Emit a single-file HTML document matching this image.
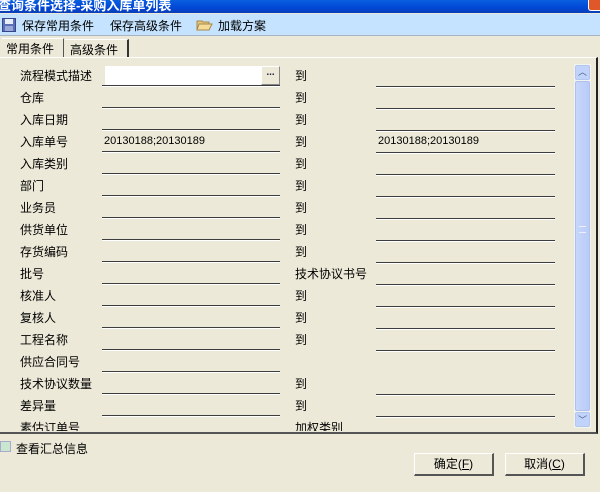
<!DOCTYPE html>
<html><head><meta charset="utf-8"><style>
*{margin:0;padding:0;box-sizing:border-box}
body{width:600px;height:492px;overflow:hidden;background:#ece9d8;font-family:"Liberation Sans","Noto Sans CJK SC","WenQuanYi Zen Hei",sans-serif;font-size:12px;color:#000;position:relative}
.a{position:absolute;white-space:nowrap}
#title{left:0;top:0;width:600px;height:13px;background:linear-gradient(#0a5fe0,#0047d6 60%,#0b3fb8);}
#title span{position:absolute;left:-2px;top:-5px;color:#fff;font-weight:bold;font-size:13px}
#close{right:0;top:0;width:12px;height:11px;background:#e0582a;border:1px solid #fff;border-top:none;border-right:none;border-radius:0 0 0 3px}
#tb{left:0;top:14px;width:600px;height:22px;background:#c5e3ff;border-bottom:1px solid #a8b4c4}
.line{position:absolute;height:2px;border-top:1px solid #3d3d3d;border-bottom:1px solid #fff}
</style></head><body>
<div class="a" id="title"><span>查询条件选择-采购入库单列表</span></div>
<div class="a" id="close"></div>
<div class="a" id="tb">
 <svg class="a" style="left:2px;top:4px" width="14" height="14"><rect x="0.5" y="0.5" width="13" height="13" fill="#5a6fb8" stroke="#34468c"/><rect x="3" y="1" width="8" height="5" fill="#e8eef8"/><rect x="3" y="8" width="8" height="5" fill="#9aa8d8"/></svg>
 <span class="a" style="left:22px;top:3px">保存常用条件</span>
 <span class="a" style="left:110px;top:3px">保存高级条件</span>
 <svg class="a" style="left:196px;top:3px" width="17" height="15"><path d="M1 4h5l1 1h6v8H1z" fill="#e8c878" stroke="#a8884a"/><path d="M3 7h13l-3 6H1z" fill="#f4dc98" stroke="#a8884a"/></svg>
 <span class="a" style="left:218px;top:3px">加载方案</span>
</div>
<!-- tabs -->
<div class="a" style="left:2px;top:38px;width:62px;height:20px;border-right:1px solid #555;border-top:1px solid #fff;background:#ece9d8"></div>
<span class="a" style="left:6px;top:40px">常用条件</span>
<div class="a" style="left:65px;top:39px;width:64px;height:18px;border-right:2px solid #333;border-top:1px solid #fff"></div>
<span class="a" style="left:70px;top:41px">高级条件</span>
<!-- panel -->
<div class="a" style="left:0;top:57px;width:598px;height:377px;border-top:1px solid #fff;border-right:2px solid #222;border-bottom:2px solid #555"></div>
<div class="a" style="left:105px;top:66px;width:156px;height:19px;background:#fff"></div>
<div class="a" style="left:261px;top:66px;width:19px;height:19px;background:#ece9d8;border:1px solid #fff;border-right-color:#888;border-bottom-color:#888;font-size:10px;text-align:center;line-height:12px;font-weight:bold;color:#224">...</div>
<div id="rows"></div>
<!-- scrollbar -->
<div class="a" style="left:574px;top:64px;width:17px;height:364px;background:#f3f3ee"></div>
<div class="a" style="left:575px;top:65px;width:15px;height:15px;background:#c1d3fb;border:1px solid #b5c6ee;border-radius:2px;text-align:center;font-size:9px;line-height:12px;color:#4d6185">︿</div>
<div class="a" style="left:575px;top:81px;width:15px;height:330px;background:linear-gradient(90deg,#c8d6fa,#b9cbf7);border:1px solid #adc0ef;border-radius:2px"></div>
<div class="a" style="left:579px;top:226px;width:7px;height:7px;border-top:1px solid #eef;border-bottom:1px solid #eef"></div>
<div class="a" style="left:575px;top:412px;width:15px;height:15px;background:#c1d3fb;border:1px solid #b5c6ee;border-radius:2px;text-align:center;font-size:9px;line-height:14px;color:#4d6185">﹀</div>
<!-- bottom -->
<div class="a" style="left:0;top:441px;width:11px;height:11px;background:#c8e6d0;border:1px solid #aac"></div>
<span class="a" style="left:16px;top:440px">查看汇总信息</span>
<div class="a" style="left:414px;top:453px;width:80px;height:23px;border:1px solid #fff;border-right:2px solid #555;border-bottom:2px solid #555;text-align:center;line-height:20px">确定(<u>F</u>)</div>
<div class="a" style="left:505px;top:453px;width:80px;height:23px;border:1px solid #fff;border-right:2px solid #555;border-bottom:2px solid #555;text-align:center;line-height:20px">取消(<u>C</u>)</div>
<script>
var L=["流程模式描述","仓库","入库日期","入库单号","入库类别","部门","业务员","供货单位","存货编码","批号","核准人","复核人","工程名称","供应合同号","技术协议数量","差异量","素估订单号"];
var R=["到","到","到","到","到","到","到","到","到","技术协议书号","到","到","到","","到","到","加权类别"];
var h="";
for(var i=0;i<L.length;i++){var y=67+22*i;var ly=85+22*i;
 if(y>430)break;
 var clip=y>415?'clip:rect(0,200px,12px,0);':'';
 h+='<span class="a" style="left:20px;top:'+y+'px;'+clip+'">'+L[i]+'</span>';
 if(R[i])h+='<span class="a" style="left:295px;top:'+y+'px;'+clip+'">'+R[i]+'</span>';
 if(ly<430){h+='<div class="line" style="left:102px;top:'+ly+'px;width:178px"></div>';
 if(i!=13)h+='<div class="line" style="left:376px;top:'+(ly+1)+'px;width:179px"></div>';}
}
h+='<span class="a" style="left:104px;top:135px;font-size:11px">20130188;20130189</span>';
h+='<span class="a" style="left:378px;top:135px;font-size:11px">20130188;20130189</span>';
document.getElementById("rows").innerHTML=h;
</script>
</body></html>
